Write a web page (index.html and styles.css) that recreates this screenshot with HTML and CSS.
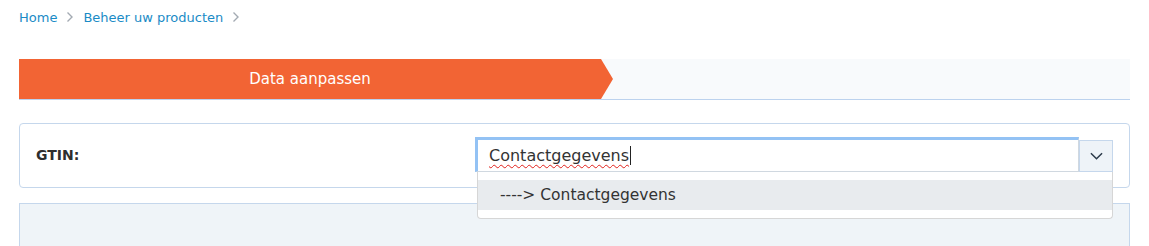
FILE: index.html
```html
<!DOCTYPE html>
<html lang="nl">
<head>
<meta charset="utf-8">
<link rel="stylesheet" href="styles.css">
</head>
<body>
<div class="page">
  <nav class="crumbs">
    <a class="crumb">Home</a>
    <svg class="sep" viewBox="0 0 8 12" width="8" height="12"><path d="M1.5 1.5 L6 6 L1.5 10.5" fill="none" stroke="#a3aab2" stroke-width="1.4"/></svg>
    <a class="crumb">Beheer uw producten</a>
    <svg class="sep" viewBox="0 0 8 12" width="8" height="12"><path d="M1.5 1.5 L6 6 L1.5 10.5" fill="none" stroke="#a3aab2" stroke-width="1.4"/></svg>
  </nav>

  <div class="steps">
    <div class="step active">Data aanpassen</div>
  </div>

  <div class="card">
    <label class="label">GTIN:</label>
    <div class="combo">
      <div class="field">
        <div class="input"><span class="typed">Contactgegevens</span><span class="caret"></span></div>
        <div class="toggle">
          <svg viewBox="0 0 14 8" width="13" height="8"><path d="M1 1 L7 7 L13 1" fill="none" stroke="#2b3a4a" stroke-width="1.6"/></svg>
        </div>
      </div>
      <div class="menu">
        <div class="option">----&gt; Contactgegevens</div>
      </div>
    </div>
  </div>

  <div class="panel"></div>
</div>
</body>
</html>
```
FILE: styles.css
```css
html, body {
  margin: 0;
  padding: 0;
  background: #ffffff;
}
body {
  font-family: "DejaVu Sans", "Open Sans", sans-serif;
  color: #333;
  overflow: hidden;
}
.page {
  padding: 0 19px;
}
.crumbs {
  display: flex;
  align-items: center;
  gap: 9px;
  height: 34px;
  font-size: 13px;
}
.crumb {
  color: #1a8bc6;
}
.sep {
  display: block;
}
.steps {
  margin-top: 25px;
  height: 40px;
  background: #f8fafc;
  border-bottom: 1px solid #bcd2ee;
  display: flex;
}
.step.active {
  width: 594px;
  background: #f26434;
  color: #fff;
  font-size: 15px;
  display: flex;
  align-items: center;
  justify-content: center;
  padding-right: 12px;
  box-sizing: border-box;
  clip-path: polygon(0 0, 582px 0, 594px 50%, 582px 100%, 0 100%);
}
.card {
  margin-top: 23px;
  border: 1px solid #c5d7ec;
  border-radius: 4px;
  padding: 13px 16px 15px;
  display: grid;
  grid-template-columns: 439px 1fr;
  align-items: center;
}
.label {
  font-weight: 700;
  font-size: 14px;
  color: #2e2e2e;
}
.combo {
  position: relative;
}
.field {
  display: flex;
  height: 35px;
}
.input {
  flex: 1;
  box-sizing: border-box;
  border-top: 3px solid #93c2f4;
  border-left: 3px solid #93c2f4;
  border-right: 1px solid #d0d8e0;
  border-bottom: 1px solid #d0d8e0;
  display: flex;
  align-items: center;
  padding-left: 11px;
  font-size: 16px;
  color: #333;
}
.typed {
  text-decoration: underline wavy #e0201a;
  text-decoration-thickness: 1px;
  text-underline-offset: 3px;
}
.caret {
  width: 1px;
  height: 19px;
  background: #222;
  margin-left: 1px;
}
.toggle {
  width: 34px;
  margin-top: 3px;
  box-sizing: border-box;
  border: 1px solid #c5d7ec;
  background: #eef3f8;
  display: flex;
  align-items: center;
  justify-content: center;
}
.menu {
  position: absolute;
  left: 2px;
  right: 0;
  top: 35px;
  background: #fff;
  border: 1px solid #d6d6d6;
  border-top: none;
  border-radius: 0 0 4px 4px;
  padding: 8px 0 8px;
  z-index: 2;
}
.option {
  height: 30px;
  background: #e8ebee;
  display: flex;
  align-items: center;
  padding-left: 22px;
  font-size: 15.5px;
  color: #333;
}
.panel {
  margin-top: 15px;
  height: 60px;
  background: #eff4f8;
  border: 1px solid #c5d7ec;
}
```
